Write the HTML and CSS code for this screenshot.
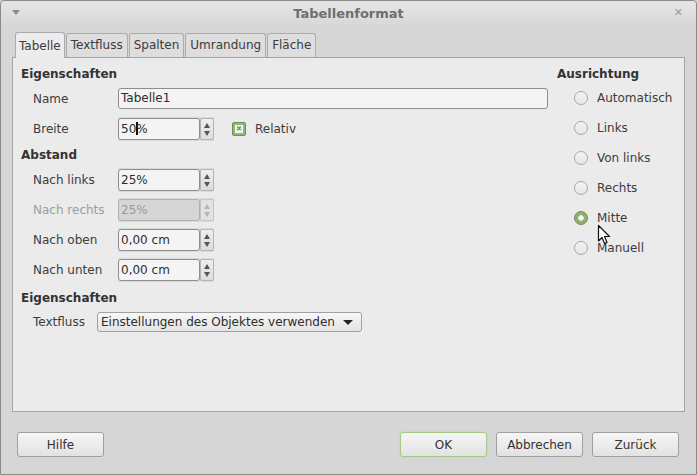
FILE: index.html
```html
<!DOCTYPE html>
<html lang="de">
<head>
    <meta charset="UTF-8">
    <title>Tabellenformat</title>
    <link rel="stylesheet" href="styles.css">
</head>
<body>
    <div class="window">
        <div class="titlebar">
            <span class="menu-arrow"></span>
            <span class="title">Tabellenformat</span>
            <span class="close">&#x2715;</span>
        </div>

        <div class="tabs">
            <div class="tab active">Tabelle</div>
            <div class="tab">Textfluss</div>
            <div class="tab">Spalten</div>
            <div class="tab">Umrandung</div>
            <div class="tab">Fläche</div>
        </div>

        <div class="panel">
            <div class="col-left">
                <div class="heading">Eigenschaften</div>
                <div class="row row-name">
                    <label class="label">Name</label>
                    <div class="textbox">Tabelle1</div>
                </div>
                <div class="row row-width">
                    <label class="label">Breite</label>
                    <div class="spin">
                        <div class="spin-text">50<span class="caret"></span>%</div>
                        <div class="spin-btn"><span class="up"></span><span class="down"></span></div>
                    </div>
                    <div class="check-row">
                        <span class="checkbox"><span class="check-x">&#x2716;</span></span>
                        <span>Relativ</span>
                    </div>
                </div>

                <div class="heading heading-gap">Abstand</div>
                <div class="row row-spin">
                    <label class="label">Nach links</label>
                    <div class="spin">
                        <div class="spin-text">25%</div>
                        <div class="spin-btn"><span class="up"></span><span class="down"></span></div>
                    </div>
                </div>
                <div class="row row-spin disabled">
                    <label class="label">Nach rechts</label>
                    <div class="spin">
                        <div class="spin-text">25%</div>
                        <div class="spin-btn"><span class="up"></span><span class="down"></span></div>
                    </div>
                </div>
                <div class="row row-spin">
                    <label class="label">Nach oben</label>
                    <div class="spin">
                        <div class="spin-text">0,00 cm</div>
                        <div class="spin-btn"><span class="up"></span><span class="down"></span></div>
                    </div>
                </div>
                <div class="row row-spin">
                    <label class="label">Nach unten</label>
                    <div class="spin">
                        <div class="spin-text">0,00 cm</div>
                        <div class="spin-btn"><span class="up"></span><span class="down"></span></div>
                    </div>
                </div>

                <div class="heading heading-last">Eigenschaften</div>
                <div class="row row-flow">
                    <label class="label label-short">Textfluss</label>
                    <div class="dropdown">
                        <span>Einstellungen des Objektes verwenden</span>
                        <span class="drop-arrow"></span>
                    </div>
                </div>
            </div>

            <div class="col-right">
                <div class="heading">Ausrichtung</div>
                <div class="radio-list">
                    <div class="radio-item"><span class="radio"></span>Automatisch</div>
                    <div class="radio-item"><span class="radio"></span>Links</div>
                    <div class="radio-item"><span class="radio"></span>Von links</div>
                    <div class="radio-item"><span class="radio"></span>Rechts</div>
                    <div class="radio-item"><span class="radio checked"></span>Mitte</div>
                    <div class="radio-item"><span class="radio"></span>Manuell</div>
                </div>
            </div>

            <!-- mouse pointer -->
            <svg class="pointer" width="14" height="22" viewBox="0 0 14 22">
                <path d="M1.5 1.5 L1.5 17 L5 13.5 L7.5 19.5 L10 18.5 L7.5 12.5 L12.5 12.5 Z" fill="#fff" stroke="#111" stroke-width="1.2" stroke-linejoin="round"/>
            </svg>
        </div>

        <div class="buttons">
            <button class="btn">Hilfe</button>
            <div class="btn-group">
                <button class="btn btn-default">OK</button>
                <button class="btn">Abbrechen</button>
                <button class="btn">Zurück</button>
            </div>
        </div>
    </div>
</body>
</html>
```

FILE: styles.css
```css
body {
    margin: 0;
    padding: 0;
    font-family: 'DejaVu Sans', 'Liberation Sans', sans-serif;
    font-size: 12px;
    color: #3c3c3c;
    background: #d6d6d6;
}

.window {
    width: 697px;
    height: 475px;
    box-sizing: border-box;
    border: 1px solid #8a8a8a;
    border-radius: 4px 4px 0 0;
    background: #d6d6d6;
    position: relative;
}

.titlebar {
    height: 24px;
    display: flex;
    align-items: center;
    justify-content: center;
    position: relative;
    background: linear-gradient(#e6e6e6, #d8d8d8);
    border-radius: 4px 4px 0 0;
}

.title {
    font-size: 13px;
    font-weight: bold;
    color: #6e6e6e;
}

.menu-arrow {
    position: absolute;
    left: 11px;
    top: 9px;
    width: 0;
    height: 0;
    border-left: 4px solid transparent;
    border-right: 4px solid transparent;
    border-top: 5px solid #8c8c8c;
}

.close {
    position: absolute;
    right: 13px;
    top: 5px;
    font-size: 11px;
    font-weight: bold;
    color: #9a9a9a;
}

/* Reiter */
.tabs {
    display: flex;
    align-items: flex-end;
    gap: 1px;
    height: 32px;
    padding-left: 14px;
}

.tab {
    height: 24px;
    line-height: 23px;
    padding: 0 4px;
    background: #dedede;
    border: 1px solid #ababab;
    border-bottom: none;
    border-radius: 3px 3px 0 0;
    box-sizing: border-box;
}

.tab.active {
    height: 26px;
    line-height: 26px;
    padding: 0 3px;
    background: #ececec;
    margin-bottom: -1px;
    position: relative;
    z-index: 1;
}

.panel {
    margin: 0 11px 0 11px;
    height: 355px;
    box-sizing: border-box;
    border: 1px solid #a4a4a4;
    background: #ebebeb;
    display: flex;
    position: relative;
}

.col-left {
    flex: 1;
    padding: 6px 9px 0 8px;
}

.col-right {
    width: 127px;
    padding-top: 6px;
}

.heading {
    height: 20px;
    line-height: 20px;
    font-weight: bold;
    color: #333;
}

.heading-gap {
    height: 20px;
}

.heading-last {
    height: 26px;
    line-height: 26px;
}

.row {
    display: flex;
    align-items: center;
}

.row-name {
    height: 29px;
}

.row-width {
    height: 32px;
}

.row-spin {
    height: 30px;
}

.row-flow {
    height: 22px;
}

.label {
    width: 85px;
    padding-left: 12px;
    flex-shrink: 0;
}

.label-short {
    width: 64px;
}

.textbox {
    flex: 1;
    height: 21px;
    line-height: 19px;
    box-sizing: border-box;
    padding-left: 2px;
    border: 1px solid #8e8e8e;
    border-radius: 3px;
    background: #f4f4f4;
    color: #2e2e2e;
}

/* Drehfeld */
.spin {
    display: flex;
    width: 96px;
    height: 24px;
    box-sizing: border-box;
    padding: 1px 0;
    background: #dadada;
}

.spin-text {
    width: 82px;
    box-sizing: border-box;
    padding-left: 2px;
    line-height: 20px;
    border: 1px solid #8e8e8e;
    border-radius: 3px;
    background: #f4f4f4;
    color: #2e2e2e;
}

.caret {
    display: inline-block;
    width: 0;
    height: 13px;
    border-left: 2px solid #111;
    margin-right: -2px;
    vertical-align: -2px;
}

.spin-btn {
    width: 14px;
    box-sizing: border-box;
    border: 1px solid #b4b4b4;
    border-radius: 2px;
    background: linear-gradient(#eeeeee, #dddddd);
    display: flex;
    flex-direction: column;
    align-items: center;
    justify-content: center;
    gap: 3px;
}

.spin-btn .up {
    border-left: 3px solid transparent;
    border-right: 3px solid transparent;
    border-bottom: 5px solid #555;
}

.spin-btn .down {
    border-left: 3px solid transparent;
    border-right: 3px solid transparent;
    border-top: 5px solid #555;
}

.disabled .label {
    color: #9c9c9c;
}

.disabled .spin-text {
    background: #d6d6d6;
    border-color: #b0b0b0;
    color: #9a9a9a;
}

.disabled .spin-btn {
    background: #e2e2e2;
    border-color: #c4c4c4;
}

.disabled .spin-btn .up {
    border-bottom-color: #b4b4b4;
}

.disabled .spin-btn .down {
    border-top-color: #b4b4b4;
}

.check-row {
    display: flex;
    align-items: center;
    gap: 9px;
    margin-left: 18px;
}

.checkbox {
    width: 14px;
    height: 14px;
    box-sizing: border-box;
    border: 1px solid #6f8f55;
    border-radius: 2px;
    background: #94b874;
    display: flex;
    align-items: center;
    justify-content: center;
}

.check-x {
    width: 8px;
    height: 8px;
    background: #f2f6ee;
    color: #7da25c;
    font-size: 7px;
    line-height: 8px;
    text-align: center;
}

.dropdown {
    width: 265px;
    height: 20px;
    box-sizing: border-box;
    padding: 0 8px 0 3px;
    border: 1px solid #a0a0a0;
    border-radius: 3px;
    background: linear-gradient(#f7f7f7, #e4e4e4);
    display: flex;
    align-items: center;
    justify-content: space-between;
    color: #2e2e2e;
}

.drop-arrow {
    border-left: 5px solid transparent;
    border-right: 5px solid transparent;
    border-top: 5px solid #222;
}

/* Ausrichtung */
.radio-list {
    margin-top: -1px;
}

.radio-item {
    height: 30px;
    display: flex;
    align-items: center;
    gap: 9px;
    padding-left: 17px;
}

.radio {
    width: 14px;
    height: 14px;
    box-sizing: border-box;
    border: 1px solid #a8a8a8;
    border-radius: 50%;
    background: linear-gradient(#f4f4f4, #e6e6e6);
}

.radio.checked {
    border-color: #6f8f55;
    background: radial-gradient(circle, #f4f4f4 0, #f4f4f4 2.5px, #8fb26e 3px);
}

.pointer {
    position: absolute;
    left: 584px;
    top: 166px;
}

/* Knöpfe unten */
.buttons {
    display: flex;
    justify-content: space-between;
    padding: 20px 17px 0 16px;
}

.btn-group {
    display: flex;
    gap: 9px;
}

.btn {
    width: 87px;
    height: 25px;
    font-family: inherit;
    font-size: 12px;
    color: #333;
    border: 1px solid #a0a0a0;
    border-radius: 3px;
    background: linear-gradient(#f6f6f6, #e2e2e2);
    padding: 0;
}

.btn-default {
    border-color: #a8c88a;
    box-shadow: 0 0 0 1px #c7dcb2;
}
```
